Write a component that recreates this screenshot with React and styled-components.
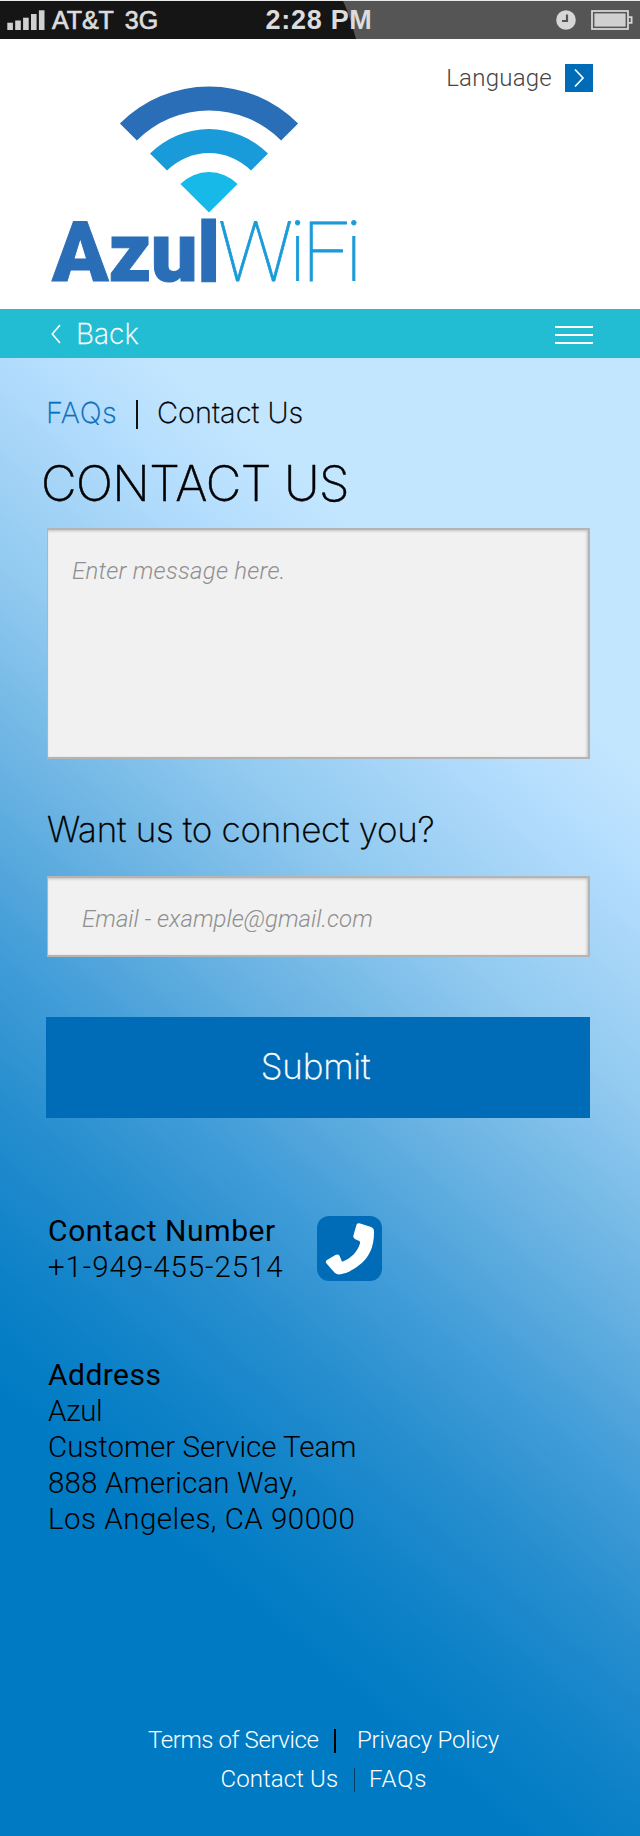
import React from "react";
import styled, { createGlobalStyle } from "styled-components";

const GlobalStyle = createGlobalStyle`
  * { box-sizing: border-box; }
  body {
    margin: 0;
    background: #fff;
    font-family: Roboto, "Liberation Sans", sans-serif;
    font-weight: 300;
    color: #000;
  }
  a { color: inherit; text-decoration: none; }
`;

const displayFont = `Inter, "Liberation Sans", sans-serif`;

const Page = styled.div`
  width: 640px;
  min-height: 1836px;
  display: flex;
  flex-direction: column;
`;

const StatusBar = styled.div`
  height: 39px;
  border-top: 1px solid #e9e9e9;
  display: flex;
  align-items: center;
  padding: 0 7px;
  background: #151515;
  color: #dcdcdc;
  position: relative;
`;

const Gloss = styled.svg`
  position: absolute;
  left: 343px;
  top: 0;
  display: block;
`;

const StatusText = styled.span`
  position: relative;
  font-family: "Liberation Sans", Arial, sans-serif;
  font-weight: ${(p) => (p.$bold ? 700 : 400)};
  -webkit-text-stroke: ${(p) => (p.$bold ? 0 : 0.7)}px currentColor;
  font-size: ${(p) => (p.$bold ? 27 : 25)}px;
  line-height: 38px;
  white-space: nowrap;
  letter-spacing: ${(p) => p.$ls}px;
  margin-left: ${(p) => p.$left}px;
`;

const StatusIcon = styled.svg`
  position: relative;
  display: block;
  flex: none;
  margin-left: ${(p) => p.$left}px;
`;

const Header = styled.header`
  height: 270px;
  display: flex;
  justify-content: space-between;
  align-items: flex-start;
  padding: 25px 47px 0 50px;
`;

const Brand = styled.a`
  display: block;
  width: 312px;
  padding-top: 21px;
`;

const WifiMark = styled.svg`
  display: block;
  margin-left: 68px;
`;

const Wordmark = styled.div`
  display: flex;
  height: 78px;
  padding-left: 2px;
  line-height: 78px;
  font-size: 83px;
  white-space: nowrap;
`;

const BrandHeavy = styled.span`
  width: 166px;
  font-weight: 900;
  letter-spacing: -0.5px;
  color: #2a6eb8;
  -webkit-text-stroke: 1px #2a6eb8;
`;

const BrandThin = styled.span`
  font-weight: 100;
  letter-spacing: -4.2px;
  color: #1a9bd9;
  -webkit-text-stroke: 0.8px #1a9bd9;
`;

const LanguageLink = styled.a`
  display: flex;
  align-items: center;
  gap: 13px;
  height: 28px;
  font-size: 24px;
  letter-spacing: 0.25px;
  color: #444;
`;

const ArrowBox = styled.span`
  width: 28px;
  height: 28px;
  display: flex;
  align-items: center;
  justify-content: center;
  background: #006cb8;
`;

const NavBar = styled.nav`
  height: 49px;
  padding: 0 47px 0 51px;
  display: flex;
  align-items: center;
  justify-content: space-between;
  background: #22bdd3;
  color: #fff;
`;

const BackLink = styled.a`
  display: flex;
  align-items: center;
  gap: 15px;
  font-family: ${displayFont};
  font-weight: 200;
  font-size: 28px;
  line-height: 49px;
  padding-top: 1px;
  -webkit-text-stroke: 0.3px currentColor;
`;

const MenuButton = styled.button`
  width: 38px;
  height: 18px;
  padding: 0;
  margin-top: 2px;
  border: 0;
  background: none;
  display: flex;
  flex-direction: column;
  justify-content: space-between;
`;

const MenuLine = styled.span`
  display: block;
  height: 2px;
  background: #fff;
`;

const Main = styled.main`
  flex: 1;
  padding: 35px 50px 0 46px;
  background: linear-gradient(
    220.4deg,
    #c3e6ff 0%,
    #c3e6ff 20%,
    #b4ddfd 26%,
    #92caf0 37%,
    #65b0e1 48%,
    #429dd8 56%,
    #258dce 64%,
    #0d81c8 72%,
    #007bc3 78%
  );
`;

const Crumbs = styled.div`
  height: 40px;
  line-height: 40px;
  display: flex;
  font-family: ${displayFont};
  font-weight: 200;
  font-size: 29px;
  -webkit-text-stroke: 0.3px currentColor;
`;

const CrumbLink = styled.a`
  color: ${(p) => (p.$active ? "#000" : "#0b70bd")};
  letter-spacing: ${(p) => p.$ls}px;
  width: ${(p) => p.$width};
  white-space: nowrap;
`;

const CrumbRule = styled.span`
  width: 1.5px;
  height: 29px;
  margin: 7px 19.5px 0 0;
  background: #111;
`;

const Title = styled.h1`
  margin: 21px 0 0 -5px;
  font-family: ${displayFont};
  font-size: 49px;
  line-height: 60px;
  font-weight: 200;
  letter-spacing: -0.55px;
  -webkit-text-stroke: 0.5px currentColor;
`;

const Field = styled.div`
  width: 543px;
  height: ${(p) => p.$height}px;
  margin: ${(p) => p.$top}px 0 0 1px;
  padding: ${(p) => p.$pad};
  border: 2px solid #b5b4b4;
  border-left-width: 1.5px;
  background: #f1f1f1;
  box-shadow: inset -1px 1px 3px rgba(0, 0, 0, 0.2);
`;

const Placeholder = styled.span`
  display: block;
  font-size: 24px;
  line-height: 30px;
  font-style: italic;
  letter-spacing: ${(p) => p.$ls}px;
  color: #8f8f8f;
`;

const Question = styled.h2`
  margin: 47px 0 0 1px;
  font-family: ${displayFont};
  font-size: 35px;
  line-height: 46px;
  font-weight: 200;
  letter-spacing: -0.27px;
  -webkit-text-stroke: 0.35px currentColor;
`;

const SubmitButton = styled.button`
  display: block;
  width: 544px;
  height: 101px;
  margin: 60px 0 0;
  padding: 0 5px 2px 0;
  border: 0;
  background: #006cb8;
  color: #fff;
  font: 200 35px/99px ${displayFont};
  letter-spacing: -0.2px;
  -webkit-text-stroke: 0.35px currentColor;
`;

const ContactRow = styled.div`
  display: flex;
  margin: 95px 0 0 2px;
`;

const Details = styled.div`
  width: ${(p) => p.$width || "auto"};
  font-size: 29.5px;
  line-height: 36px;
`;

const Line = styled.div`
  letter-spacing: ${(p) => p.$ls}px;
`;

const Label = styled(Line)`
  font-size: 30px;
  font-weight: 400;
`;

const CallButton = styled.a`
  width: 65px;
  height: 65px;
  margin-top: 3px;
  border-radius: 12px;
  background: #006cb8;
  svg { display: block; }
`;

const Address = styled.address`
  margin: 72px 0 0 2px;
  font-style: normal;
`;

const Footer = styled.footer`
  margin-top: 184px;
  color: #fff;
  font-size: 24px;
`;

const FooterRow = styled.div`
  display: flex;
  height: 39px;
  line-height: 39px;
  padding-left: ${(p) => p.$left}px;
`;

const FooterLink = styled.a`
  width: ${(p) => p.$width};
  letter-spacing: ${(p) => p.$ls}px;
  white-space: nowrap;
`;

const FooterRule = styled.span`
  width: 1.5px;
  height: 24px;
  margin: 8px ${(p) => p.$right}px 0 0;
  background: ${(p) => p.$color};
`;

const signalBars = [7.3, 9.5, 12.3, 16, 19.7];

export default function App() {
  return (
    <Page>
      <GlobalStyle />
      <StatusBar>
        <Gloss width="297" height="38" viewBox="0 0 297 38">
          <path d="M0 0H297V38H13C8 20 4 8 0 0Z" fill="#555" />
        </Gloss>
        <StatusIcon $left={0} width="38" height="20" viewBox="0 0 38 20">
          {signalBars.map((h, i) => (
            <rect key={h} x={0.3 + i * 7.9} y={20 - h} width="5.6" height={h} fill="#d0d0d0" />
          ))}
        </StatusIcon>
        <StatusText $left={7} $ls={-0.1}>AT&amp;T</StatusText>
        <StatusText $left={11} $ls={0.3}>3G</StatusText>
        <StatusText $left={107} $ls={0.7} $bold>2:28 PM</StatusText>
        <StatusIcon $left={183} width="20" height="20" viewBox="0 0 20 20">
          <circle cx="10" cy="10" r="9.8" fill="#d6d6d6" />
          <path d="M11 4.5V11H6" fill="none" stroke="#555" strokeWidth="2.2" />
        </StatusIcon>
        <StatusIcon $left={15} width="42" height="20" viewBox="0 0 42 20">
          <rect x="1" y="1" width="36" height="18" fill="none" stroke="#d6d6d6" strokeWidth="1.8" />
          <rect x="3.4" y="3.4" width="31.2" height="13.2" fill="#d0d0d0" />
          <path d="M37.5 7.2H40.6V12.8H37.5" fill="none" stroke="#d6d6d6" strokeWidth="1.8" />
        </StatusIcon>
      </StatusBar>

      <Header>
        <Brand href="#">
          <WifiMark width="182" height="129" viewBox="-91 -127.5 182 129">
            <path d="M-89.1-89.1A126 126 0 0 1 89.1-89.1L72.1-72.1A102 102 0 0 0-72.1-72.1Z" fill="#2a6eb8" />
            <path d="M-59-59A83.5 83.5 0 0 1 59-59L42-42A59.4 59.4 0 0 0-42-42Z" fill="#1a9bd9" />
            <path d="M-28.6-28.6A40.5 40.5 0 0 1 28.6-28.6L0 0Z" fill="#16b9e8" />
          </WifiMark>
          <Wordmark>
            <BrandHeavy>Azul</BrandHeavy>
            <BrandThin>WiFi</BrandThin>
          </Wordmark>
        </Brand>
        <LanguageLink href="#">
          Language
          <ArrowBox>
            <svg width="12" height="20" viewBox="0 0 12 20" fill="none" stroke="#fff" strokeWidth="1.7">
              <path d="M2 1.5L10 10L2 18.5" />
            </svg>
          </ArrowBox>
        </LanguageLink>
      </Header>

      <NavBar>
        <BackLink href="#">
          <svg width="10" height="20" viewBox="0 0 10 20" fill="none" stroke="#fff" strokeWidth="1.6">
            <path d="M9 1L1.3 10L9 19" />
          </svg>
          Back
        </BackLink>
        <MenuButton aria-label="Menu">
          <MenuLine />
          <MenuLine />
          <MenuLine />
        </MenuButton>
      </NavBar>

      <Main>
        <Crumbs>
          <CrumbLink href="#" $width="90px" $ls={0.5}>FAQs</CrumbLink>
          <CrumbRule />
          <CrumbLink href="#" $active $width="auto" $ls={0}>Contact Us</CrumbLink>
        </Crumbs>
        <Title>CONTACT US</Title>
        <Field $height={231} $top={14} $pad="26px 24px">
          <Placeholder $ls={0.25}>Enter message here.</Placeholder>
        </Field>
        <Question>Want us to connect you?</Question>
        <Field $height={81} $top={24} $pad="26px 34px">
          <Placeholder $ls={0}>Email - example@gmail.com</Placeholder>
        </Field>
        <SubmitButton>Submit</SubmitButton>

        <ContactRow>
          <Details $width="269px">
            <Label $ls={0.6}>Contact Number</Label>
            <Line $ls={0.9}>+1-949-455-2514</Line>
          </Details>
          <CallButton href="#" aria-label="Call">
            <svg width="65" height="65" viewBox="9 11 195 195" fill="#fff">
              <path d="M128 36Q131 32 136 33L169 43Q180 47 180 56C181 105 165 135 135 159C118 173 100 182 80 186Q69 188 62 181Q48 166 37 153Q33 147 39 143L64 128Q73 124 77 131L83 146Q84 149 88 147C110 138 131 119 138 93Q139 88 136 86L124 81Q117 78 118 70Z" />
            </svg>
          </CallButton>
        </ContactRow>

        <Address>
          <Details>
            <Label $ls={0.45}>Address</Label>
            <Line $ls={-0.4}>Azul</Line>
            <Line $ls={-0.02}>Customer Service Team</Line>
            <Line $ls={0.15}>888 American Way,</Line>
            <Line $ls={0.5}>Los Angeles, CA 90000</Line>
          </Details>
        </Address>

        <Footer>
          <FooterRow $left={102}>
            <FooterLink href="#" $width="186px" $ls={-0.4}>Terms of Service</FooterLink>
            <FooterRule $right={21.5} $color="#000" />
            <FooterLink href="#" $width="150px" $ls={-0.2}>Privacy Policy</FooterLink>
          </FooterRow>
          <FooterRow $left={174.5}>
            <FooterLink href="#" $width="133px" $ls={0.1}>Contact Us</FooterLink>
            <FooterRule $right={14} $color="#053c66" />
            <FooterLink href="#" $width="70px" $ls={0.9}>FAQs</FooterLink>
          </FooterRow>
        </Footer>
      </Main>
    </Page>
  );
}
